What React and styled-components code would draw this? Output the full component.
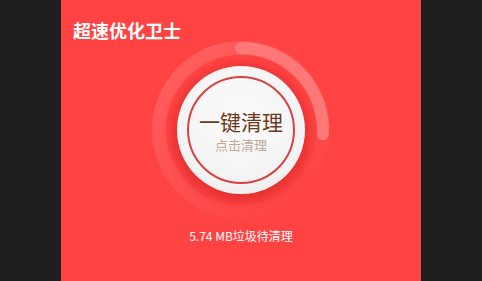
import styled, { createGlobalStyle } from 'styled-components'

const GlobalStyle = createGlobalStyle`
  html, body {
    margin: 0;
    padding: 0;
    background: #1f1f1f;
    font-family: "Noto Sans CJK SC", "Noto Sans", sans-serif;
  }
`

const Screen = styled.div`
  width: 482px;
  height: 281px;
  display: flex;
  justify-content: center;
  background: #1f1f1f;
  overflow: hidden;
`

const Panel = styled.main`
  width: 360px;
  height: 100%;
  background: #ff4343;
  display: flex;
  flex-direction: column;
  padding: 0 12px;
  box-sizing: border-box;
`

const Title = styled.h1`
  margin: 20px 0 0;
  font-size: 18px;
  line-height: 20px;
  font-weight: 700;
  color: #fff;
`

const Dial = styled.div`
  margin: 1px auto 0;
  width: 178px;
  height: 178px;
  display: grid;
  place-items: center;

  & > * {
    grid-area: 1 / 1;
  }
`

const Ring = styled.svg`
  width: 178px;
  height: 178px;
`

const CleanButton = styled.button`
  width: 128px;
  height: 128px;
  border: none;
  border-radius: 50%;
  padding: 0;
  background: radial-gradient(circle at 50% 40%, #fbfbfb 0%, #f3f3f3 65%, #e4e4e4 100%);
  box-shadow: 0 3px 10px 5px rgba(185, 20, 20, 0.35);
  display: grid;
  place-items: center;
  cursor: pointer;
  font-family: inherit;
`

const InnerRing = styled.div`
  width: 108px;
  height: 108px;
  border-radius: 50%;
  border: 2px solid #d64343;
  display: flex;
  flex-direction: column;
  align-items: center;
  justify-content: center;
  box-sizing: border-box;
`

const Label = styled.span`
  font-size: ${p => p.$size}px;
  line-height: ${p => p.$line}px;
  color: ${p => p.$color};
  margin-top: ${p => p.$offset || 0}px;
`

const Status = styled.p`
  margin: 9px 0 0;
  text-align: center;
  font-size: 12px;
  line-height: 16px;
  color: #fff;
`

const App = () => (
  <Screen>
    <GlobalStyle />
    <Panel>
      <Title>超速优化卫士</Title>
      <Dial>
        <Ring viewBox="0 0 178 178">
          <defs>
            <linearGradient id="track" x1="0.1" y1="0" x2="0.8" y2="1">
              <stop offset="0" stopColor="#fff" stopOpacity="0.15" />
              <stop offset="0.55" stopColor="#fff" stopOpacity="0.07" />
              <stop offset="1" stopColor="#fff" stopOpacity="0" />
            </linearGradient>
          </defs>
          <circle cx="89" cy="89" r="82" fill="none" stroke="url(#track)" strokeWidth="14" />
          <path
            d="M 89 7 A 82 82 0 0 1 170.9 93.3"
            fill="none"
            stroke="#ff7878"
            strokeWidth="12"
            strokeLinecap="round"
          />
        </Ring>
        <CleanButton>
          <InnerRing>
            <Label $size={21} $line={26} $color="#6e3a1c" $offset={2}>一键清理</Label>
            <Label $size={13} $line={18} $color="#c2a797" $offset={2}>点击清理</Label>
          </InnerRing>
        </CleanButton>
      </Dial>
      <Status>5.74 MB垃圾待清理</Status>
    </Panel>
  </Screen>
)

export default App
